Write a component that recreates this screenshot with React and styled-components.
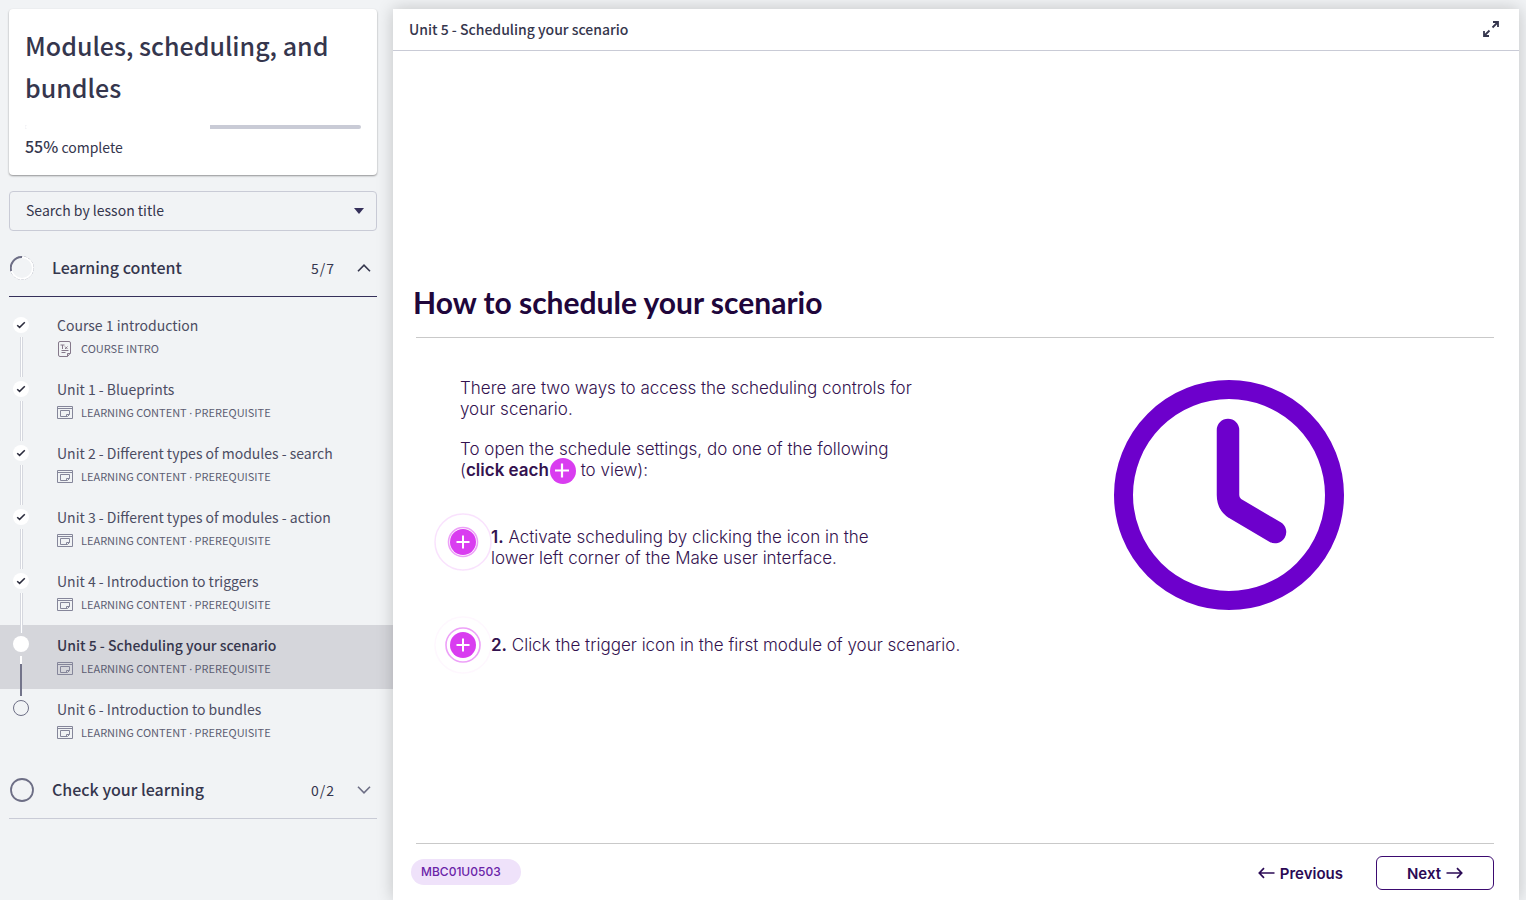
import React from "react";
import styled, { createGlobalStyle, css } from "styled-components";

const sans = `"Noto Sans CJK SC", "Noto Sans", sans-serif`;
const inter = `Inter, "Liberation Sans", sans-serif`;

const GlobalStyle = createGlobalStyle`
  * { box-sizing: border-box; }
  body { margin: 0; background: #f1f3f5; color: #35364d; font-family: ${sans}; font-size: 14px; }
  h1, h2, p, ol, ul { margin: 0; padding: 0; }
  ol, ul { list-style: none; }
  a { color: inherit; text-decoration: none; }
  button, select { font: inherit; color: inherit; cursor: pointer; }
`;

const Page = styled.div`
  display: flex;
  min-height: 100vh;
  overflow: hidden;
`;

const Sidebar = styled.aside`
  flex: 0 0 393px;
  padding-top: 9px;
`;

const CourseCard = styled.section`
  margin: 0 16px 16px 9px;
  padding: 15px 16px;
  background: #fff;
  border-radius: 4px;
  box-shadow: 0 1px 2px rgba(0, 0, 0, 0.4);
`;

const CourseTitle = styled.h1`
  font-size: 25px;
  font-weight: 500;
  line-height: 42px;
`;

const Progress = styled.div`
  height: 4px;
  margin: 17px 0 5px;
  border-radius: 2px;
  background: #c9cbd6;
  overflow: hidden;
`;

const ProgressFill = styled.div`
  height: 100%;
  background: #fff;
`;

const ProgressLabel = styled.p`
  line-height: 25px;
  strong { font-size: 16px; font-weight: 500; }
`;

const SearchBox = styled.label`
  display: grid;
  align-items: center;
  height: 40px;
  margin: 0 16px 9px 9px;
  > * { grid-area: 1 / 1; }
  > svg { justify-self: end; margin-right: 13px; pointer-events: none; }
`;

const SearchSelect = styled.select`
  width: 100%;
  height: 100%;
  padding: 0 32px 2px 16px;
  appearance: none;
  background: transparent;
  border: 1px solid #c9cbd6;
  border-radius: 4px;
`;

const SectionHeader = styled.button`
  display: flex;
  align-items: center;
  width: calc(100% - 25px);
  height: 57px;
  margin: 0 16px 0 9px;
  padding: 0 6px 0 1px;
  background: none;
  border: 0;
  border-bottom: 1px solid ${(p) => (p.$open ? "#35305a" : "#c9cbd6")};
  text-align: left;
`;

const SectionTitle = styled.span`
  flex: 1;
  margin-left: 18px;
  padding-bottom: 2px;
  font-size: 16px;
  font-weight: 500;
`;

const SectionCount = styled.span`
  margin-right: 22px;
  letter-spacing: 1px;
`;

const LessonList = styled.ol`
  padding: 8px 0 9px;
`;

const LessonLink = styled.a`
  display: flex;
  gap: 28px;
  height: 64px;
  padding-left: 13px;
  background: ${(p) => (p.$active ? "#d5d6db" : "transparent")};
`;

const Timeline = styled.span`
  position: relative;
  z-index: 1;
  display: flex;
  flex-direction: column;
  align-items: center;
  gap: 4px;
  width: 16px;
  padding-top: ${(p) => (p.$raised ? 11 : 12)}px;
`;

const Dot = styled.span`
  display: grid;
  place-items: center;
  flex: none;
  width: 16px;
  height: 16px;
  border-radius: 50%;
  ${(p) => (p.$state === "todo" ? css`border: 1px solid #6d6e85;` : css`background: #fff;`)}
`;

const Connector = styled.span`
  flex: none;
  width: ${(p) => (p.$state === "current" ? 2 : 3)}px;
  height: 40px;
  ${(p) =>
    p.$state === "current"
      ? css`background: linear-gradient(#fff 8px, #73748a 8px);`
      : css`background: #fff; border: solid #d6d8df; border-width: 0 1px;`}
`;

const LessonText = styled.span`
  padding-top: 8px;
`;

const LessonTitle = styled.span`
  display: block;
  line-height: 24px;
  font-weight: ${(p) => (p.$active ? 500 : 400)};
  color: ${(p) => (p.$active ? "#35364d" : "#4c4d63")};
`;

const LessonMeta = styled.span`
  display: flex;
  align-items: center;
  gap: 8px;
  line-height: 23px;
  font-size: 11px;
  color: #5c5d72;
`;

const Separator = styled.span`
  font-family: "Noto Sans", sans-serif;
  line-height: 1;
`;

const Main = styled.main`
  position: relative;
  z-index: 2;
  flex: 1;
  display: flex;
  flex-direction: column;
  margin: 9px 7px 0 0;
  background: #fff;
  box-shadow: 0 0 16px rgba(0, 0, 0, 0.2);
`;

const TopBar = styled.header`
  display: flex;
  align-items: center;
  justify-content: space-between;
  height: 42px;
  padding: 0 19px 2px 16px;
  border-bottom: 1px solid #c9cbd6;
  font-weight: 500;
`;

const IconButton = styled.button`
  display: flex;
  padding: 0;
  background: none;
  border: 0;
`;

const Slide = styled.article`
  flex: 1;
  display: flex;
  flex-direction: column;
  padding: 230px 25px 0 18px;
  font-family: ${inter};
  color: #33124f;
`;

const SlideTitle = styled.h2`
  padding-left: 2px;
  font-family: Lato, sans-serif;
  font-size: 30px;
  font-weight: 700;
  line-height: 42px;
  color: #20063b;
`;

const SlideBody = styled.div`
  flex: 1;
  display: flex;
  justify-content: space-between;
  margin: 14px 0 0 5px;
  padding: 40px 150px 0 18px;
  border-top: 1px solid #c9c9c9;
  font-size: 17px;
  font-weight: 300;
  line-height: 21px;
  strong { font-weight: 600; }
`;

const Intro = styled.div`
  display: grid;
  gap: 19px;
  width: 470px;
  margin-left: 26px;
  svg { margin: -6px 0 -6px 1px; vertical-align: -2px; }
`;

const Steps = styled.ul`
  display: grid;
  gap: 45px;
  margin-top: 32px;
`;

const Step = styled.li`
  display: flex;
  align-items: center;
  min-height: 58px;
  svg { flex: none; margin-right: -1px; }
`;

const StepText = styled.p`
  max-width: ${(p) => (p.$narrow ? "400px" : "none")};
  padding-top: ${(p) => (p.$narrow ? "12px" : "0")};
`;

const Illustration = styled.figure`
  margin: 2px 0 0;
`;

const SlideFooter = styled.footer`
  display: flex;
  align-items: center;
  height: 56px;
  gap: 33px;
  padding-top: 2px;
  font-weight: 600;
  font-size: 15px;
  color: #2b0a55;
`;

const FooterRule = styled.div`
  margin-left: 5px;
  border-top: 1px solid #c9c9c9;
`;

const Tag = styled.span`
  margin: 0 auto 2px 0;
  padding: 0 20px 0 10px;
  border-radius: 13px;
  background: #efe2fa;
  color: #6a24a8;
  font-size: 12px;
  font-weight: 500;
  line-height: 26px;
`;

const NavButton = styled.button`
  display: flex;
  align-items: center;
  justify-content: center;
  gap: 5px;
  height: 34px;
  padding: 0;
  background: none;
  border: 0;
  ${(p) =>
    p.$outlined &&
    css`
      width: 118px;
      border: 1px solid #3b0a70;
      border-radius: 6px;
    `}
`;

const CheckIcon = () => (
  <svg width="10" height="8" viewBox="0 0 10 8" fill="none" stroke="#2b2c3d" strokeWidth="1.5">
    <path d="M1.2 4.2 3.6 6.4 8.8 1.2" />
  </svg>
);

const TextFileIcon = () => (
  <svg width="16" height="16" viewBox="0 0 16 16" fill="none" stroke="#85788a">
    <path d="M3 .5h9q1.500 0 1.500 1.500V12l-3 3.500H3q-1.500 0-1.500-1.500V2q0-1.500 1.500-1.500zM10.500 15.500v-3h3M3.500 4h4M5.500 4v4M8 5.500l2.500 2.500M10.500 5.500 8 8M4.500 9.500h7M4.500 11.500h4" />
  </svg>
);

const ContentIcon = () => (
  <svg width="16" height="14" viewBox="0 0 16 14" fill="none" stroke="#85869a">
    <path d="M.5 .5h15v12H.5zM.5 2.500h15M3.500 4.500h9v4l-2 2h-7zM9.500 10V8.500h3" />
  </svg>
);

const Chevron = ({ up }) => (
  <svg width="14" height="8" viewBox="0 0 14 8" fill="none" stroke={up ? "#35364d" : "#6d6e85"} strokeWidth="1.600">
    <path d={up ? "M1 7.200 7 1.200 13 7.200" : "M1 .8 7 6.800 13 .8"} />
  </svg>
);

const SectionRing = ({ started }) => (
  <svg width="24" height="24" viewBox="0 0 24 24" fill="none">
    {started ? (
      <>
        <circle cx="12" cy="12" r="11.500" stroke="#b4b6c2" strokeDasharray="3 1" />
        <circle cx="12" cy="12" r="10.800" stroke="#fff" strokeWidth="1.600" />
        <path d="M1.200 15A11 11 0 0 1 12 1" stroke="#6d6e85" strokeWidth="2" />
      </>
    ) : (
      <circle cx="12" cy="12" r="11" stroke="#6d6e85" strokeWidth="1.800" />
    )}
  </svg>
);

const PlusDot = () => (
  <svg width="26" height="26" viewBox="0 0 26 26">
    <circle cx="13" cy="13" r="13" fill="#d93df0" />
    <path d="M12 5.500v14M5 12.500h14" stroke="#fff" strokeWidth="2.200" />
  </svg>
);

const Marker = ({ ring, halo }) => (
  <svg width="58" height="58" viewBox="0 0 58 58" fill="none">
    <circle cx="29" cy="29" r="28" stroke="#d93df0" strokeOpacity={halo} strokeWidth="1.500" />
    <circle cx="29" cy="29" r={ring} stroke="#eda0f8" strokeWidth="1.600" />
    <circle cx="29" cy="29" r="13" fill="#d93df0" />
    <path d="M29 22.500v13M22.500 29h13" stroke="#fff" strokeWidth="2" />
  </svg>
);

const Clock = () => (
  <svg width="230" height="230" viewBox="0 0 230 230" fill="none" stroke="#6d00cc" role="img" aria-label="Clock">
    <circle cx="115" cy="115" r="105.500" strokeWidth="19" />
    <path d="M114 50v65q0 9 7 13.500L161 152" strokeWidth="22.500" strokeLinecap="round" />
  </svg>
);

const LongArrow = ({ left }) => (
  <svg width="17" height="12" viewBox="0 0 17 12" fill="none" stroke="currentColor" strokeWidth="1.700">
    <path d={left ? "M16.500 6H1.500M6 1.200 1.300 6 6 10.800" : "M.5 6h15M11 1.200 15.700 6 11 10.800"} />
  </svg>
);

const ExpandIcon = () => (
  <svg width="18" height="18" viewBox="0 0 18 18" fill="none" stroke="#35364d" strokeWidth="1.800">
    <path d="M10.500 7.500 16 2M11 2h5v5M7.500 10.500 2 16M2 11v5h5" />
  </svg>
);

const lessons = [
  { title: "Course 1 introduction", tags: ["COURSE INTRO"], state: "done", text: true },
  { title: "Unit 1 - Blueprints", state: "done" },
  { title: "Unit 2 - Different types of modules - search", state: "done" },
  { title: "Unit 3 - Different types of modules - action", state: "done" },
  { title: "Unit 4 - Introduction to triggers", state: "done" },
  { title: "Unit 5 - Scheduling your scenario", state: "current" },
  { title: "Unit 6 - Introduction to bundles", state: "todo" },
];

const Lesson = ({ title, tags = ["LEARNING CONTENT", "PREREQUISITE"], state, text }) => {
  const active = state === "current";
  return (
    <li>
      <LessonLink href="#" $active={active} aria-current={active ? "page" : undefined}>
        <Timeline $raised={state !== "done"}>
          <Dot $state={state}>{state === "done" && <CheckIcon />}</Dot>
          {state !== "todo" && <Connector $state={state} />}
        </Timeline>
        <LessonText>
          <LessonTitle $active={active}>{title}</LessonTitle>
          <LessonMeta>
            {text ? <TextFileIcon /> : <ContentIcon />}
            <span>
              {tags[0]}
              {tags[1] && (
                <>
                  {" "}
                  <Separator>·</Separator> {tags[1]}
                </>
              )}
            </span>
          </LessonMeta>
        </LessonText>
      </LessonLink>
    </li>
  );
};

const Section = ({ title, count, open, started, children }) => (
  <>
    <SectionHeader type="button" $open={open} aria-expanded={!!open}>
      <SectionRing started={started} />
      <SectionTitle>{title}</SectionTitle>
      <SectionCount>{count}</SectionCount>
      <Chevron up={open} />
    </SectionHeader>
    {children}
  </>
);

export default function App() {
  return (
    <>
      <GlobalStyle />
      <Page>
        <Sidebar>
          <CourseCard>
            <CourseTitle>Modules, scheduling, and bundles</CourseTitle>
            <Progress role="progressbar" aria-label="Course progress" aria-valuenow={55}>
              <ProgressFill style={{ width: "55%" }} />
            </Progress>
            <ProgressLabel>
              <strong>55%</strong> complete
            </ProgressLabel>
          </CourseCard>
          <SearchBox>
            <SearchSelect aria-label="Search by lesson title">
              <option>Search by lesson title</option>
            </SearchSelect>
            <svg width="10" height="6" viewBox="0 0 10 6" fill="#35305a">
              <path d="M0 0h10L5 6z" />
            </svg>
          </SearchBox>
          <Section title="Learning content" count="5/7" open started>
            <LessonList>
              {lessons.map((l) => (
                <Lesson key={l.title} {...l} />
              ))}
            </LessonList>
          </Section>
          <Section title="Check your learning" count="0/2" />
        </Sidebar>
        <Main>
          <TopBar>
            <span>Unit 5 - Scheduling your scenario</span>
            <IconButton type="button" aria-label="Full screen">
              <ExpandIcon />
            </IconButton>
          </TopBar>
          <Slide>
            <SlideTitle>How to schedule your scenario</SlideTitle>
            <SlideBody>
              <div>
                <Intro>
                  <p>There are two ways to access the scheduling controls for your scenario.</p>
                  <p>
                    To open the schedule settings, do one of the following (<strong>click each</strong>
                    <PlusDot /> to view):
                  </p>
                </Intro>
                <Steps>
                  <Step>
                    <Marker ring={14.5} halo={0.15} />
                    <StepText $narrow>
                      <strong>1.</strong> Activate scheduling by clicking the icon in the lower left corner of the
                      Make user interface.
                    </StepText>
                  </Step>
                  <Step>
                    <Marker ring={17} halo={0.04} />
                    <StepText>
                      <strong>2.</strong> Click the trigger icon in the first module of your scenario.
                    </StepText>
                  </Step>
                </Steps>
              </div>
              <Illustration>
                <Clock />
              </Illustration>
            </SlideBody>
            <FooterRule />
            <SlideFooter>
              <Tag>MBC01U0503</Tag>
              <NavButton type="button">
                <LongArrow left /> Previous
              </NavButton>
              <NavButton type="button" $outlined>
                Next <LongArrow />
              </NavButton>
            </SlideFooter>
          </Slide>
        </Main>
      </Page>
    </>
  );
}
